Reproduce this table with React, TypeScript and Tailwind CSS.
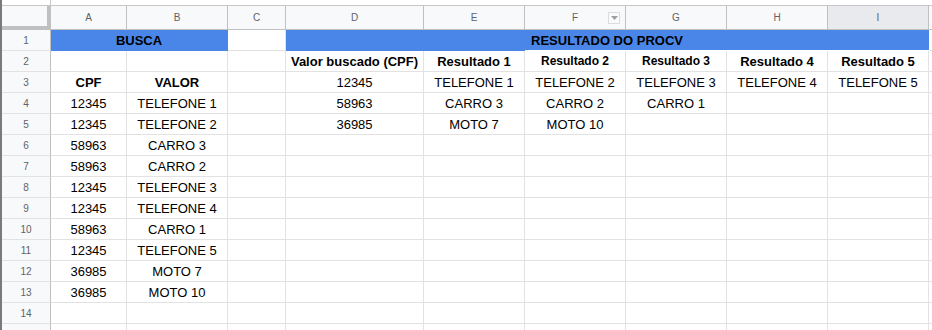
import React from 'react';

// sheet layout: row-header column + A..I + overflow column
const GRID = 'grid grid-cols-[49px_76px_101px_58px_138px_101px_101px_101px_101px_101px_1fr]';

const letters = ['A', 'B', 'C', 'D', 'E', 'F', 'G', 'H', 'I'];

type Row = string[];

// rows 3..15, columns A..I
const body: Row[] = [
  ['CPF', 'VALOR', '', '12345', 'TELEFONE 1', 'TELEFONE 2', 'TELEFONE 3', 'TELEFONE 4', 'TELEFONE 5'],
  ['12345', 'TELEFONE 1', '', '58963', 'CARRO 3', 'CARRO 2', 'CARRO 1', '', ''],
  ['12345', 'TELEFONE 2', '', '36985', 'MOTO 7', 'MOTO 10', '', '', ''],
  ['58963', 'CARRO 3', '', '', '', '', '', '', ''],
  ['58963', 'CARRO 2', '', '', '', '', '', '', ''],
  ['12345', 'TELEFONE 3', '', '', '', '', '', '', ''],
  ['12345', 'TELEFONE 4', '', '', '', '', '', '', ''],
  ['58963', 'CARRO 1', '', '', '', '', '', '', ''],
  ['12345', 'TELEFONE 5', '', '', '', '', '', '', ''],
  ['36985', 'MOTO 7', '', '', '', '', '', '', ''],
  ['36985', 'MOTO 10', '', '', '', '', '', '', ''],
  ['', '', '', '', '', '', '', '', ''],
  ['', '', '', '', '', '', '', '', ''],
];

const RowHead = ({ n }: { n?: number }) => (
  <div className="h-[21px] bg-[#f8f9fa] border-r border-b border-r-[#c0c0c0] border-b-[#e2e2e3] flex items-center justify-center text-[10px] text-[#5f6368]">
    {n}
  </div>
);

const Cell = ({ children, className = '' }: { children?: React.ReactNode; className?: string }) => (
  <div className={`h-[21px] border-r border-b border-[#e2e2e3] bg-white flex items-center justify-center text-[13px] leading-[15px] text-black whitespace-nowrap overflow-hidden ${className}`}>
    {children}
  </div>
);

const FilterButton = () => (
  <span className="absolute right-[5px] top-[6px] w-[12px] h-[12px] border border-[#dadce0] bg-[#fafafa] flex items-center justify-center">
    <svg width="7" height="4" viewBox="0 0 7 4">
      <path d="M0 0h7L3.5 4z" fill="#9aa0a6" />
    </svg>
  </span>
);

export default function App() {
  return (
    <div className="w-[932px] h-[330px] overflow-hidden bg-white border-l-2 border-[#7a7a7a] font-['Liberation_Sans',Arial,sans-serif]">
      {/* strip left over from the toolbar above */}
      <div className={GRID}>
        <div className="h-[6px] border-r border-b border-[#c7c7c7]" />
        <div className="col-span-10 h-[6px] border-b border-[#c7c7c7]" />
      </div>

      {/* column letters */}
      <div className={GRID}>
        <div className="h-[24px] bg-[#f8f9fa] border-r-4 border-b-4 border-[#c0c0c0]" />
        {letters.map((l) => (
          <div
            key={l}
            className={`relative h-[24px] border-r border-b border-[#c0c0c0] flex items-center justify-center text-[10px] text-[#5f6368] ${l === 'I' ? 'bg-[#e8eaed]' : 'bg-[#f8f9fa]'}`}
          >
            {l}
            {l === 'F' && <FilterButton />}
          </div>
        ))}
        <div className="h-[24px] bg-[#f8f9fa] border-b border-[#c0c0c0]" />
      </div>

      {/* row 1: merged titles */}
      <div className={GRID}>
        <RowHead n={1} />
        <Cell className="col-span-2 !bg-[#4a86e8] !border-[#4a86e8] font-bold">BUSCA</Cell>
        <Cell />
        <Cell className="col-span-6 !bg-[#4a86e8] !border-[#4a86e8] font-bold">RESULTADO DO PROCV</Cell>
        <div className="h-[21px] border-b border-[#e2e2e3]" />
      </div>

      {/* row 2: result headers */}
      <div className={GRID}>
        <RowHead n={2} />
        <Cell />
        <Cell />
        <Cell />
        <Cell className="font-bold">Valor buscado (CPF)</Cell>
        <Cell className="font-bold">Resultado 1</Cell>
        <Cell className="relative font-bold !text-[12px] shadow-[0_-1px_0_0_#fff]">Resultado 2</Cell>
        <Cell className="relative font-bold !text-[12px] shadow-[0_-1px_0_0_#fff]">Resultado 3</Cell>
        <Cell className="relative font-bold shadow-[0_-1px_0_0_#fff]">Resultado 4</Cell>
        <Cell className="relative font-bold shadow-[0_-1px_0_0_#fff]">Resultado 5</Cell>
        <div className="h-[21px] border-b border-[#e2e2e3]" />
      </div>

      {body.map((row, i) => (
        <div key={i} className={GRID}>
          {/* last row only peeks in at the bottom edge, its number stays hidden */}
          <RowHead n={i + 3 < 15 ? i + 3 : undefined} />
          {row.map((v, j) => (
            <Cell key={j} className={i === 0 && j < 2 ? 'font-bold' : ''}>
              {v}
            </Cell>
          ))}
          <div className="h-[21px] border-b border-[#e2e2e3]" />
        </div>
      ))}
    </div>
  );
}
